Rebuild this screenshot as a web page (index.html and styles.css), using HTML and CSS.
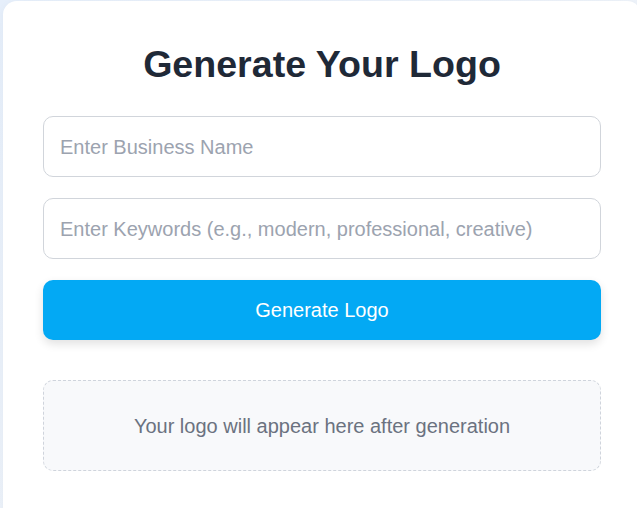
FILE: index.html
```html
<!DOCTYPE html>
<html lang="en">
<head>
<meta charset="utf-8">
<title>Generate Your Logo</title>
<link rel="stylesheet" href="styles.css">
</head>
<body>
  <main class="card">
    <h1 class="title">Generate Your Logo</h1>
    <input class="field" type="text" placeholder="Enter Business Name">
    <input class="field" type="text" placeholder="Enter Keywords (e.g., modern, professional, creative)">
    <button class="btn" type="button">Generate Logo</button>
    <div class="result">Your logo will appear here after generation</div>
  </main>
</body>
</html>
```

FILE: styles.css
```css
* { box-sizing: border-box; }
html, body { margin: 0; height: 100%; overflow: hidden; }
body {
  background: linear-gradient(135deg, #e6effb 0%, #f3f5f8 100%);
  padding: 1px 0 0 3px;
  font-family: "Liberation Sans", Arial, sans-serif;
}
.card {
  width: 638px;
  min-height: 520px;
  background: #ffffff;
  border-radius: 14px;
  padding: 42px 40px 40px;
  display: flex;
  flex-direction: column;
  box-shadow: 0 2px 10px rgba(0, 0, 0, 0.04);
}
.title {
  margin: 0 0 31px;
  text-align: center;
  font-size: 37.6px;
  font-weight: 700;
  color: #1f2937;
  line-height: 42px;
}
.field {
  height: 61px;
  width: 100%;
  border: 1px solid #d1d5db;
  border-radius: 10px;
  padding: 1px 16px 0;
  font-family: "Liberation Sans", Arial, sans-serif;
  font-size: 20px;
  color: #1f2937;
  background: #ffffff;
  margin: 0 0 21px;
  outline: none;
}
.field::placeholder { color: #9ca3af; }
.btn {
  height: 60px;
  width: 100%;
  border: none;
  border-radius: 10px;
  background: #03a9f4;
  color: #ffffff;
  font-family: "Liberation Sans", Arial, sans-serif;
  font-size: 20px;
  box-shadow: 0 4px 10px rgba(0, 0, 0, 0.12);
  margin: 0 0 40px;
  cursor: pointer;
}
.result {
  height: 91px;
  border: 1px dashed #cfd4dc;
  border-radius: 10px;
  background: #f8f9fb;
  display: flex;
  align-items: center;
  justify-content: center;
  padding-top: 2px;
  font-size: 20px;
  color: #6b7280;
}
```
